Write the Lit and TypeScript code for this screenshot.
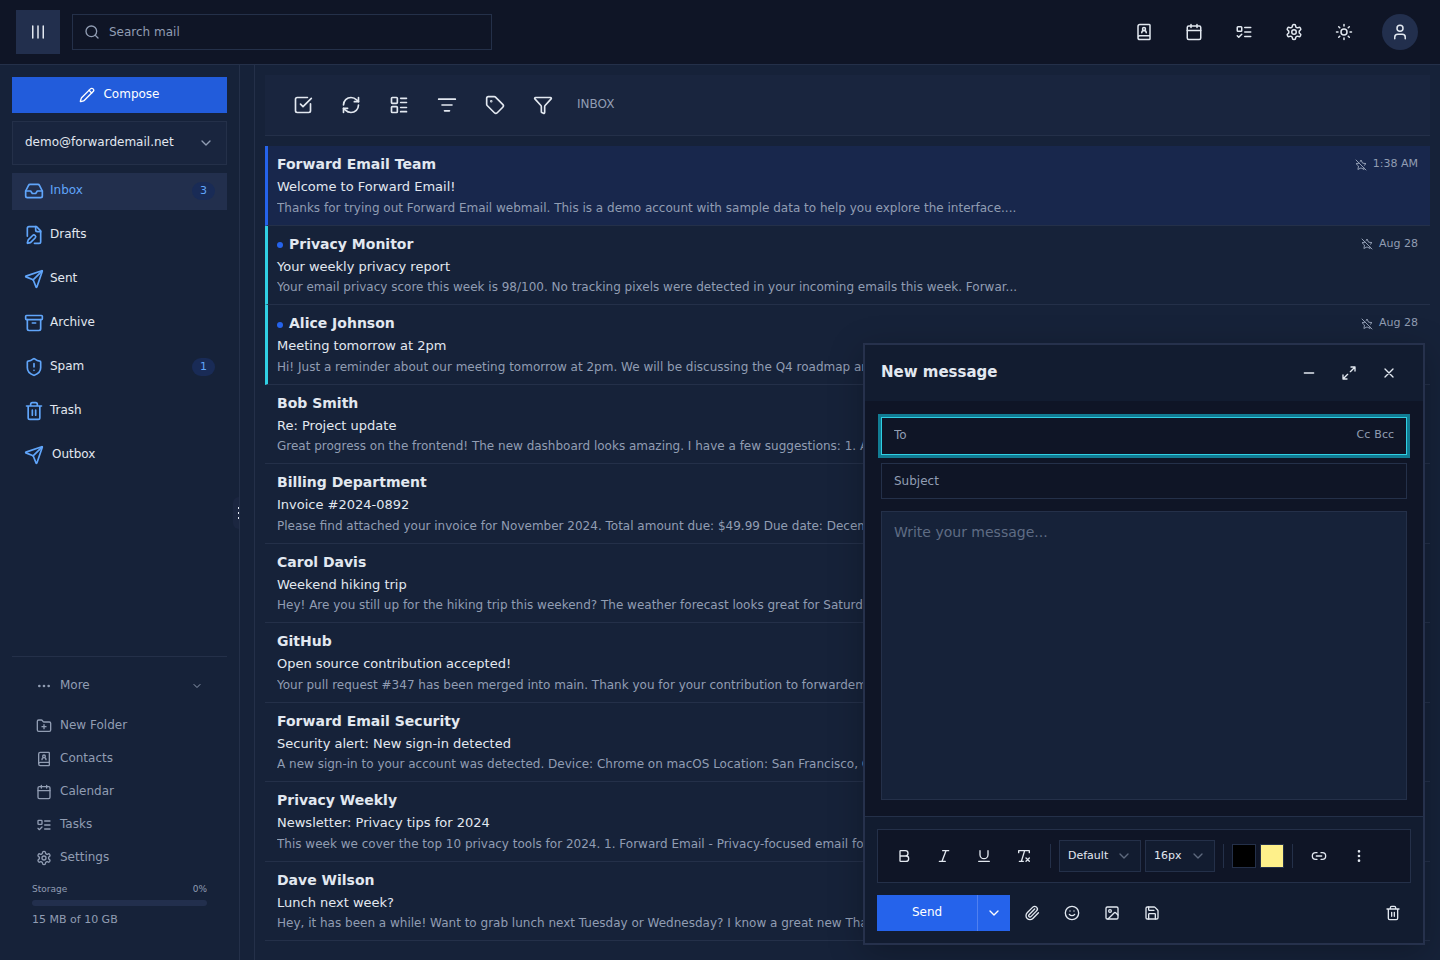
import { LitElement, html, svg, css, nothing } from "lit";
import { customElement, property, state } from "lit/decorators.js";
import { classMap } from "lit/directives/class-map.js";
import { styleMap } from "lit/directives/style-map.js";

const icons: Record<string, unknown> = {
  columns: svg`<path d="M5 4v16M12 4v16M19 4v16"/>`,
  search: svg`<path d="m21 21-4.34-4.34"/><circle cx="11" cy="11" r="8"/>`,
  contacts: svg`<path d="M15 13a3 3 0 1 0-6 0"/><path d="M4 19.5v-15A2.5 2.5 0 0 1 6.5 2H19a1 1 0 0 1 1 1v18a1 1 0 0 1-1 1H6.5a1 1 0 0 1 0-5H20"/><circle cx="12" cy="8" r="2"/>`,
  calendar: svg`<path d="M8 2v4M16 2v4"/><rect width="18" height="18" x="3" y="4" rx="2"/><path d="M3 10h18"/>`,
  tasks: svg`<rect x="3" y="5" width="6" height="6" rx="1"/><path d="m3 17 2 2 4-4M13 6h8M13 12h8M13 18h8"/>`,
  settings: svg`<path d="M12.22 2h-.44a2 2 0 0 0-2 2v.18a2 2 0 0 1-1 1.73l-.43.25a2 2 0 0 1-2 0l-.15-.08a2 2 0 0 0-2.73.73l-.22.38a2 2 0 0 0 .73 2.73l.15.1a2 2 0 0 1 1 1.72v.51a2 2 0 0 1-1 1.74l-.15.09a2 2 0 0 0-.73 2.73l.22.38a2 2 0 0 0 2.73.73l.15-.08a2 2 0 0 1 2 0l.43.25a2 2 0 0 1 1 1.73V20a2 2 0 0 0 2 2h.44a2 2 0 0 0 2-2v-.18a2 2 0 0 1 1-1.73l.43-.25a2 2 0 0 1 2 0l.15.08a2 2 0 0 0 2.73-.73l.22-.39a2 2 0 0 0-.73-2.73l-.15-.08a2 2 0 0 1-1-1.74v-.5a2 2 0 0 1 1-1.74l.15-.09a2 2 0 0 0 .73-2.73l-.22-.38a2 2 0 0 0-2.73-.73l-.15.08a2 2 0 0 1-2 0l-.43-.25a2 2 0 0 1-1-1.73V4a2 2 0 0 0-2-2z"/><circle cx="12" cy="12" r="3"/>`,
  sun: svg`<circle cx="12" cy="12" r="4"/><path d="M12 2v2M12 20v2M4.93 4.93l1.41 1.41M17.66 17.66l1.41 1.41M2 12h2M20 12h2M6.34 17.66l-1.41 1.41M19.07 4.93l-1.41 1.41"/>`,
  user: svg`<path d="M19 21v-2a4 4 0 0 0-4-4H9a4 4 0 0 0-4 4v2"/><circle cx="12" cy="7" r="4"/>`,
  pencil: svg`<path d="M21.174 6.812a1 1 0 0 0-3.986-3.987L3.842 16.174a2 2 0 0 0-.5.83l-1.321 4.352a.5.5 0 0 0 .623.622l4.353-1.32a2 2 0 0 0 .83-.497z"/><path d="m15 5 4 4"/>`,
  chevron: svg`<path d="m6 9 6 6 6-6"/>`,
  inbox: svg`<path d="M22 12h-6l-2 3h-4l-2-3H2"/><path d="M5.45 5.11 2 12v6a2 2 0 0 0 2 2h16a2 2 0 0 0 2-2v-6l-3.45-6.89A2 2 0 0 0 16.76 4H7.24a2 2 0 0 0-1.79 1.11z"/>`,
  drafts: svg`<path d="M12.5 22H18a2 2 0 0 0 2-2V7l-5-5H6a2 2 0 0 0-2 2v9.5"/><path d="M14 2v4a2 2 0 0 0 2 2h4"/><path d="M13.378 15.626a1 1 0 1 0-3.004-3.004l-5.01 5.012a2 2 0 0 0-.506.854l-.837 2.87a.5.5 0 0 0 .62.62l2.87-.837a2 2 0 0 0 .854-.506z"/>`,
  send: svg`<path d="M14.536 21.686a.5.5 0 0 0 .937-.024l6.5-19a.496.496 0 0 0-.635-.635l-19 6.5a.5.5 0 0 0-.024.937l7.93 3.18a2 2 0 0 1 1.112 1.11z"/><path d="m21.854 2.147-10.94 10.939"/>`,
  archive: svg`<rect width="20" height="5" x="2" y="3" rx="1"/><path d="M4 8v11a2 2 0 0 0 2 2h12a2 2 0 0 0 2-2V8M10 12h4"/>`,
  spam: svg`<path d="M20 13c0 5-3.5 7.5-7.66 8.95a1 1 0 0 1-.67-.01C7.5 20.5 4 18 4 13V6a1 1 0 0 1 1-1c2 0 4.5-1.2 6.24-2.72a1.17 1.17 0 0 1 1.52 0C14.51 3.81 17 5 19 5a1 1 0 0 1 1 1z"/><path d="M12 8v4M12 16h.01"/>`,
  trash: svg`<path d="M3 6h18M19 6v14a2 2 0 0 1-2 2H7a2 2 0 0 1-2-2V6M8 6V4a2 2 0 0 1 2-2h4a2 2 0 0 1 2 2v2M10 11v6M14 11v6"/>`,
  more: svg`<circle cx="12" cy="12" r="1"/><circle cx="19" cy="12" r="1"/><circle cx="5" cy="12" r="1"/>`,
  dots: svg`<circle cx="12" cy="12" r="1"/><circle cx="12" cy="5" r="1"/><circle cx="12" cy="19" r="1"/>`,
  folder: svg`<path d="M12 10v6M9 13h6"/><path d="M20 20a2 2 0 0 0 2-2V8a2 2 0 0 0-2-2h-7.9a2 2 0 0 1-1.69-.9L9.6 3.9A2 2 0 0 0 7.93 3H4a2 2 0 0 0-2 2v13a2 2 0 0 0 2 2Z"/>`,
  check: svg`<path d="M21 10.656V19a2 2 0 0 1-2 2H5a2 2 0 0 1-2-2V5a2 2 0 0 1 2-2h12.344"/><path d="m9 11 3 3L22 4"/>`,
  refresh: svg`<path d="M3 12a9 9 0 0 1 9-9 9.75 9.75 0 0 1 6.74 2.74L21 8"/><path d="M21 3v5h-5"/><path d="M21 12a9 9 0 0 1-9 9 9.75 9.75 0 0 1-6.74-2.74L3 16"/><path d="M8 16H3v5"/>`,
  layout: svg`<rect width="7" height="7" x="3" y="3" rx="1"/><rect width="7" height="7" x="3" y="14" rx="1"/><path d="M14 4h7M14 9h7M14 15h7M14 20h7"/>`,
  sort: svg`<path d="M2 5h20M6 12h12M9 19h6"/>`,
  tag: svg`<path d="M12.586 2.586A2 2 0 0 0 11.172 2H4a2 2 0 0 0-2 2v7.172a2 2 0 0 0 .586 1.414l8.704 8.704a2.426 2.426 0 0 0 3.42 0l6.58-6.58a2.426 2.426 0 0 0 0-3.42z"/><circle cx="7.5" cy="7.5" r=".5" fill="currentColor"/>`,
  filter: svg`<path d="M10 20a1 1 0 0 0 .553.895l2 1A1 1 0 0 0 14 21v-7a2 2 0 0 1 .517-1.341L21.74 4.67A1 1 0 0 0 21 3H3a1 1 0 0 0-.742 1.67l7.225 7.989A2 2 0 0 1 10 14z"/>`,
  unstar: svg`<path d="M8.34 8.34 2 9.27l5 4.87L5.82 21 12 17.77 18.18 21l-.59-3.43M18.42 12.76 22 9.27l-6.91-1L12 2l-1.44 2.91M2 2l20 20"/>`,
  minus: svg`<path d="M5 12h14"/>`,
  expand: svg`<path d="M15 3h6v6M21 3l-7 7M3 21l7-7M9 21H3v-6"/>`,
  close: svg`<path d="M18 6 6 18M6 6l12 12"/>`,
  bold: svg`<path d="M6 12h9a4 4 0 0 1 0 8H7a1 1 0 0 1-1-1V5a1 1 0 0 1 1-1h7a4 4 0 0 1 0 8"/>`,
  italic: svg`<path d="M19 4h-9M14 20H5M15 4 9 20"/>`,
  underline: svg`<path d="M6 4v6a6 6 0 0 0 12 0V4M4 20h16"/>`,
  clear: svg`<path d="M4 7V4h16v3M5 20h6M13 4 8 20M15 15l5 5M20 15l-5 5"/>`,
  link: svg`<path d="M9 17H7A5 5 0 0 1 7 7h2M15 7h2a5 5 0 1 1 0 10h-2M8 12h8"/>`,
  attach: svg`<path d="m16 6-8.414 8.586a2 2 0 0 0 2.829 2.829l8.414-8.586a4 4 0 1 0-5.657-5.657l-8.379 8.551a6 6 0 1 0 8.485 8.485l8.379-8.551"/>`,
  smile: svg`<circle cx="12" cy="12" r="10"/><path d="M8 14s1.5 2 4 2 4-2 4-2M9 9h.01M15 9h.01"/>`,
  image: svg`<rect width="18" height="18" x="3" y="3" rx="2"/><circle cx="9" cy="9" r="2"/><path d="m21 15-3.086-3.086a2 2 0 0 0-2.828 0L6 21"/>`,
  save: svg`<path d="M15.2 3a2 2 0 0 1 1.4.6l3.8 3.8a2 2 0 0 1 .6 1.4V19a2 2 0 0 1-2 2H5a2 2 0 0 1-2-2V5a2 2 0 0 1 2-2z"/><path d="M17 21v-7a1 1 0 0 0-1-1H8a1 1 0 0 0-1 1v7M7 3v4a1 1 0 0 0 1 1h7"/>`,
};

const icon = (name: string, size = 16) => html`<svg
  class="icon"
  width=${size}
  height=${size}
  viewBox="0 0 24 24"
  fill="none"
  stroke="currentColor"
  stroke-width="2"
  stroke-linecap="round"
  stroke-linejoin="round"
  aria-hidden="true"
>${icons[name]}</svg>`;

const base = css`
  :host, *, *::before, *::after { box-sizing: border-box; }
  button, input, select, textarea {
    font: inherit;
    color: inherit;
    background: none;
    border: 0;
    border-radius: 0;
    margin: 0;
    padding: 0;
    outline: none;
  }
  button, select { cursor: pointer; }
  button { display: inline-flex; align-items: center; justify-content: center; }
  select { appearance: none; }
  a { color: inherit; text-decoration: none; }
  h1, h2, h3, p, ul { margin: 0; padding: 0; font-weight: inherit; font-size: inherit; }
  ul { list-style: none; }
  .icon { display: block; flex: none; }
  .picker { position: relative; display: flex; align-items: center; }
  .picker select { width: 100%; height: 100%; }
  .picker .icon { position: absolute; pointer-events: none; color: var(--muted); }
`;

@customElement("mail-header")
class MailHeader extends LitElement {
  static styles = [base, css`
    :host {
      display: flex;
      align-items: center;
      height: 65px;
      padding: 0 22px 0 16px;
      background: var(--deep);
      border-bottom: 1px solid var(--line);
    }
    .menu { width: 44px; height: 44px; background: var(--raised); }
    .search {
      display: flex;
      align-items: center;
      gap: 9px;
      flex: 0 1 420px;
      height: 36px;
      margin-left: 12px;
      padding: 0 11px;
      border: 1px solid var(--line);
      color: var(--muted);
    }
    .search input { flex: 1; min-width: 0; color: var(--text); }
    .search input::placeholder { color: var(--muted); opacity: 1; }
    .actions { display: flex; align-items: center; gap: 14px; margin-left: auto; }
    .action { width: 36px; height: 36px; }
    .avatar { width: 36px; height: 36px; margin-left: 6px; border-radius: 50%; background: var(--raised); }
  `];

  render() {
    const actions = [
      ["contacts", "Contacts"],
      ["calendar", "Calendar"],
      ["tasks", "Tasks"],
      ["settings", "Settings"],
      ["sun", "Toggle theme"],
    ];
    return html`
      <button class="menu" aria-label="Toggle sidebar">${icon("columns", 18)}</button>
      <label class="search">
        ${icon("search", 16)}
        <input type="search" placeholder="Search mail" aria-label="Search mail" />
      </label>
      <nav class="actions">
        ${actions.map(([name, label]) => html`<button class="action" aria-label=${label}>${icon(name, 18)}</button>`)}
        <button class="avatar" aria-label="Account">${icon("user", 18)}</button>
      </nav>
    `;
  }
}

@customElement("mail-sidebar")
class MailSidebar extends LitElement {
  @state() private current = "Inbox";

  static styles = [base, css`
    :host {
      position: relative;
      display: flex;
      flex-direction: column;
      flex: none;
      width: 240px;
      padding: 12px;
      background: var(--panel);
      border-right: 1px solid var(--line);
    }
    .compose { gap: 8px; height: 36px; flex: none; background: var(--button); color: #fff; }
    .account { height: 44px; flex: none; margin: 8px 0; background: var(--bar); border: 1px solid var(--line); }
    .account select { padding: 0 12px 2px; }
    .account .icon { right: 12px; }
    .folders { display: flex; flex-direction: column; gap: 7px; }
    .folder { display: flex; align-items: center; gap: 6px; height: 37px; padding: 0 12px 1px; }
    .folder .icon { color: var(--accent); }
    .folder.loose { gap: 8px; }
    .folder.active { background: var(--raised); color: var(--accent); }
    .name { padding-bottom: 2px; }
    .count {
      margin-left: auto;
      padding: 0 8px;
      border-radius: 10px;
      background: var(--badge);
      color: var(--accent);
      font-size: 11px;
      line-height: 18px;
    }
    .more { margin-top: auto; padding: 12px 12px 19px; border-top: 1px solid var(--line); color: var(--muted); }
    .more li { padding: 0 12px; }
    .toggle, .extra { display: flex; align-items: center; justify-content: flex-start; gap: 8px; width: 100%; height: 33px; }
    .toggle { margin-bottom: 7px; padding: 0 12px; }
    .toggle .chevron { margin-left: auto; }
    .storage { padding: 6px 8px 0; font-size: 9px; }
    .figures { display: flex; justify-content: space-between; line-height: 18px; }
    .meter { height: 6px; margin: 2px 0 5px; border-radius: 3px; background: var(--raised); overflow: hidden; }
    .fill { height: 100%; background: var(--primary); }
    .usage { font-size: 11px; line-height: 18px; }
    .grip {
      position: absolute;
      right: 0;
      top: 50%;
      width: 6px;
      height: 32px;
      transform: translateY(-50%);
      justify-content: flex-end;
      border-radius: 6px 0 0 6px;
      background: var(--grip);
    }
    .dots { width: 1px; height: 12px; background: repeating-linear-gradient(var(--text) 0 2px, transparent 2px 5px); }
  `];

  render() {
    const folders: [string, string, number?][] = [
      ["inbox", "Inbox", 3],
      ["drafts", "Drafts"],
      ["send", "Sent"],
      ["archive", "Archive"],
      ["spam", "Spam", 1],
      ["trash", "Trash"],
      ["send", "Outbox"],
    ];
    const extras = [
      ["folder", "New Folder"],
      ["contacts", "Contacts"],
      ["calendar", "Calendar"],
      ["tasks", "Tasks"],
      ["settings", "Settings"],
    ];
    return html`
      <button class="compose">${icon("pencil", 16)}<span class="name">Compose</span></button>
      <div class="picker account">
        <select aria-label="Account"><option>demo@forwardemail.net</option></select>
        ${icon("chevron", 16)}
      </div>
      <nav class="folders">
        ${folders.map(([glyph, name, count]) => html`
          <a
            href="#${name.toLowerCase()}"
            class=${classMap({ folder: true, active: name === this.current, loose: name === "Outbox" })}
            @click=${() => (this.current = name)}
          >
            ${icon(glyph, 20)}<span class="name">${name}</span>
            ${count ? html`<span class="count">${count}</span>` : nothing}
          </a>`)}
      </nav>
      <section class="more">
        <button class="toggle">
          ${icon("more", 16)}<span class="name">More</span>
          <span class="chevron">${icon("chevron", 12)}</span>
        </button>
        <ul>
          ${extras.map(([glyph, name]) => html`
            <li><a class="extra" href="#${glyph}">${icon(glyph, 16)}<span class="name">${name}</span></a></li>`)}
        </ul>
        <div class="storage">
          <div class="figures"><span>Storage</span><span>0%</span></div>
          <div class="meter"><div class="fill" style=${styleMap({ width: "0%" })}></div></div>
          <p class="usage">15 MB of 10 GB</p>
        </div>
      </section>
      <button class="grip" aria-label="Resize sidebar"><span class="dots"></span></button>
    `;
  }
}

interface Message {
  from: string;
  subject: string;
  preview: string;
  time: string;
  unread?: boolean;
  selected?: boolean;
}

const messages: Message[] = [
  { from: "Forward Email Team", subject: "Welcome to Forward Email!", time: "1:38 AM", selected: true,
    preview: "Thanks for trying out Forward Email webmail. This is a demo account with sample data to help you explore the interface...." },
  { from: "Privacy Monitor", subject: "Your weekly privacy report", time: "Aug 28", unread: true,
    preview: "Your email privacy score this week is 98/100. No tracking pixels were detected in your incoming emails this week. Forwar..." },
  { from: "Alice Johnson", subject: "Meeting tomorrow at 2pm", time: "Aug 28", unread: true,
    preview: "Hi! Just a reminder about our meeting tomorrow at 2pm. We will be discussing the Q4 roadmap and..." },
  { from: "Bob Smith", subject: "Re: Project update", time: "Aug 27",
    preview: "Great progress on the frontend! The new dashboard looks amazing. I have a few suggestions: 1. Add..." },
  { from: "Billing Department", subject: "Invoice #2024-0892", time: "Aug 27",
    preview: "Please find attached your invoice for November 2024. Total amount due: $49.99 Due date: December..." },
  { from: "Carol Davis", subject: "Weekend hiking trip", time: "Aug 26",
    preview: "Hey! Are you still up for the hiking trip this weekend? The weather forecast looks great for Saturday..." },
  { from: "GitHub", subject: "Open source contribution accepted!", time: "Aug 26",
    preview: "Your pull request #347 has been merged into main. Thank you for your contribution to forwardemail..." },
  { from: "Forward Email Security", subject: "Security alert: New sign-in detected", time: "Aug 25",
    preview: "A new sign-in to your account was detected. Device: Chrome on macOS Location: San Francisco, CA..." },
  { from: "Privacy Weekly", subject: "Newsletter: Privacy tips for 2024", time: "Aug 25",
    preview: "This week we cover the top 10 privacy tools for 2024. 1. Forward Email - Privacy-focused email for..." },
  { from: "Dave Wilson", subject: "Lunch next week?", time: "Aug 24",
    preview: "Hey, it has been a while! Want to grab lunch next Tuesday or Wednesday? I know a great new Thai..." },
];

@customElement("mail-list")
class MailList extends LitElement {
  static styles = [base, css`
    :host {
      display: flex;
      flex-direction: column;
      gap: 10px;
      flex: 1;
      min-width: 0;
      margin-left: 14px;
      padding: 10px;
      overflow: hidden;
      border-left: 1px solid var(--line);
    }
    .toolbar {
      display: flex;
      align-items: center;
      gap: 12px;
      flex: none;
      height: 61px;
      padding: 0 20px;
      background: var(--bar);
      border-bottom: 1px solid var(--line);
    }
    .tool { width: 36px; height: 36px; }
    .title { margin-left: 4px; padding-bottom: 2px; color: var(--muted); }
    .row {
      display: grid;
      gap: 2px;
      padding: 8px 12px;
      border-bottom: 1px solid var(--line);
      line-height: 1.5;
    }
    .row.selected, .row.unread { padding-left: 9px; border-left: 3px solid var(--cyan); }
    .row.selected { background: var(--selected); border-left-color: var(--primary); }
    .top { display: flex; align-items: center; gap: 6px; }
    .from { font-size: 14px; font-weight: 700; }
    .dot { width: 6px; height: 6px; margin-top: 2px; border-radius: 50%; background: var(--primary); }
    .when { display: flex; align-items: center; gap: 6px; margin-left: auto; font-size: 11px; color: var(--muted); }
    .subject { font-size: 13px; }
    .preview { color: var(--muted); overflow: hidden; white-space: nowrap; text-overflow: ellipsis; }
  `];

  render() {
    const tools = [
      ["check", "Select all"],
      ["refresh", "Refresh"],
      ["layout", "Change layout"],
      ["sort", "Sort"],
      ["tag", "Labels"],
      ["filter", "Filter"],
    ];
    return html`
      <div class="toolbar">
        ${tools.map(([name, label]) => html`<button class="tool" aria-label=${label}>${icon(name, 20)}</button>`)}
        <h2 class="title">INBOX</h2>
      </div>
      <ul>
        ${messages.map((m) => html`
          <li class=${classMap({ row: true, selected: !!m.selected, unread: !!m.unread })}>
            <div class="top">
              ${m.unread ? html`<span class="dot"></span>` : nothing}
              <h3 class="from">${m.from}</h3>
              <span class="when">${icon("unstar", 12)}<time>${m.time}</time></span>
            </div>
            <p class="subject">${m.subject}</p>
            <p class="preview">${m.preview}</p>
          </li>`)}
      </ul>
    `;
  }
}

@customElement("compose-window")
class ComposeWindow extends LitElement {
  @property() heading = "New message";

  static styles = [base, css`
    :host {
      display: flex;
      flex-direction: column;
      background: var(--deep);
      border: 2px solid var(--edge);
      box-shadow: 0 8px 32px rgba(0, 0, 0, 0.25);
    }
    .head { display: flex; align-items: center; height: 56px; padding: 0 16px; background: var(--shade); }
    .title { flex: 1; padding-bottom: 2px; font-size: 15px; font-weight: 700; }
    .buttons, .tools, .actions { display: flex; align-items: center; gap: 4px; }
    .tool { width: 36px; height: 36px; flex: none; }
    .fields { display: flex; flex-direction: column; flex: 1; min-height: 0; padding: 16px; }
    .to, .subject { display: flex; align-items: center; padding: 0 12px; border: 1px solid var(--line); }
    .to { height: 38px; gap: 4px; padding-bottom: 2px; border-color: var(--cyan); box-shadow: 0 0 0 3px var(--ring); }
    .to input { flex: 1; min-width: 0; }
    .to button { color: var(--muted); font-size: 11px; }
    .subject { width: 100%; height: 36px; margin: 8px 0 12px; }
    .message {
      flex: 1;
      width: 100%;
      padding: 10px 12px;
      resize: none;
      background: var(--panel);
      border: 1px solid var(--line);
      font-size: 14px;
      line-height: 20px;
    }
    input::placeholder { color: var(--muted); opacity: 1; }
    textarea::placeholder { color: var(--faint); opacity: 1; }
    .foot { display: grid; gap: 12px; padding: 12px; background: var(--shade); border-top: 1px solid var(--line); }
    .tools { padding: 8px; background: var(--deep); border: 1px solid var(--line); }
    .rule { width: 1px; height: 24px; margin: 0 4px; background: var(--line); }
    .pick { height: 32px; border: 1px solid var(--line); background: var(--shade); font-size: 11px; }
    .pick.family { width: 82px; }
    .pick.size { width: 70px; }
    .pick select { padding: 0 24px 0 8px; }
    .pick .icon { right: 8px; opacity: 0.6; }
    .swatch { width: 24px; height: 24px; padding: 0; border: 1px solid var(--line); appearance: none; }
    .swatch::-webkit-color-swatch-wrapper { padding: 0; }
    .swatch::-webkit-color-swatch { border: 0; border-radius: 0; }
    .split { display: flex; background: var(--primary); color: #fff; }
    .send { width: 100px; height: 36px; padding-bottom: 2px; }
    .later { width: 33px; height: 36px; border-left: 1px solid var(--split); }
    .discard { margin-left: auto; }
  `];

  private tool(name: string, label: string, extra = "") {
    return html`<button class="tool ${extra}" aria-label=${label}>${icon(name, 16)}</button>`;
  }

  render() {
    return html`
      <header class="head">
        <h2 class="title">${this.heading}</h2>
        <div class="buttons">
          ${this.tool("minus", "Minimize")}${this.tool("expand", "Expand")}${this.tool("close", "Close")}
        </div>
      </header>
      <div class="fields">
        <div class="to">
          <input type="text" placeholder="To" aria-label="To" />
          <button>Cc</button><button>Bcc</button>
        </div>
        <input class="subject" type="text" placeholder="Subject" aria-label="Subject" />
        <textarea class="message" placeholder="Write your message..." aria-label="Message"></textarea>
      </div>
      <footer class="foot">
        <div class="tools">
          ${this.tool("bold", "Bold")}${this.tool("italic", "Italic")}
          ${this.tool("underline", "Underline")}${this.tool("clear", "Clear formatting")}
          <span class="rule"></span>
          <div class="picker pick family">
            <select aria-label="Font"><option>Default</option></select>${icon("chevron", 16)}
          </div>
          <div class="picker pick size">
            <select aria-label="Font size"><option>16px</option></select>${icon("chevron", 16)}
          </div>
          <span class="rule"></span>
          <input class="swatch" type="color" value="#000000" aria-label="Text colour" />
          <input class="swatch" type="color" value="#fef08a" aria-label="Highlight colour" />
          <span class="rule"></span>
          ${this.tool("link", "Insert link")}${this.tool("dots", "More formatting")}
        </div>
        <div class="actions">
          <div class="split">
            <button class="send">Send</button>
            <button class="later" aria-label="Send options">${icon("chevron", 16)}</button>
          </div>
          ${this.tool("attach", "Attach file")}${this.tool("smile", "Emoji")}
          ${this.tool("image", "Insert image")}${this.tool("save", "Save draft")}
          ${this.tool("trash", "Discard", "discard")}
        </div>
      </footer>
    `;
  }
}

@customElement("app-root")
class AppRoot extends LitElement {
  static styles = css`
    :host {
      --deep: #0f1526;
      --panel: #162239;
      --bar: #19253e;
      --raised: #222f4d;
      --shade: #121c30;
      --grip: #1b2640;
      --selected: #18274c;
      --badge: #192b56;
      --line: #243049;
      --edge: #26314c;
      --text: #e2e8f0;
      --muted: #919db3;
      --faint: #5f6c84;
      --accent: #60a5fa;
      --primary: #2563eb;
      --button: #225cdb;
      --split: #5080f0;
      --cyan: #30cfe3;
      --ring: #117c93;
      position: relative;
      display: flex;
      flex-direction: column;
      height: 100vh;
      overflow: hidden;
      background: var(--panel);
      color: var(--text);
      font-family: "DejaVu Sans", sans-serif;
      font-size: 12px;
      line-height: 18px;
    }
    .body { display: flex; flex: 1; min-height: 0; }
    .floating { position: absolute; right: 15px; bottom: 15px; width: 562px; height: 602px; max-width: 100%; }
  `;

  render() {
    return html`
      <mail-header></mail-header>
      <div class="body">
        <mail-sidebar></mail-sidebar>
        <mail-list></mail-list>
      </div>
      <compose-window class="floating"></compose-window>
    `;
  }
}
